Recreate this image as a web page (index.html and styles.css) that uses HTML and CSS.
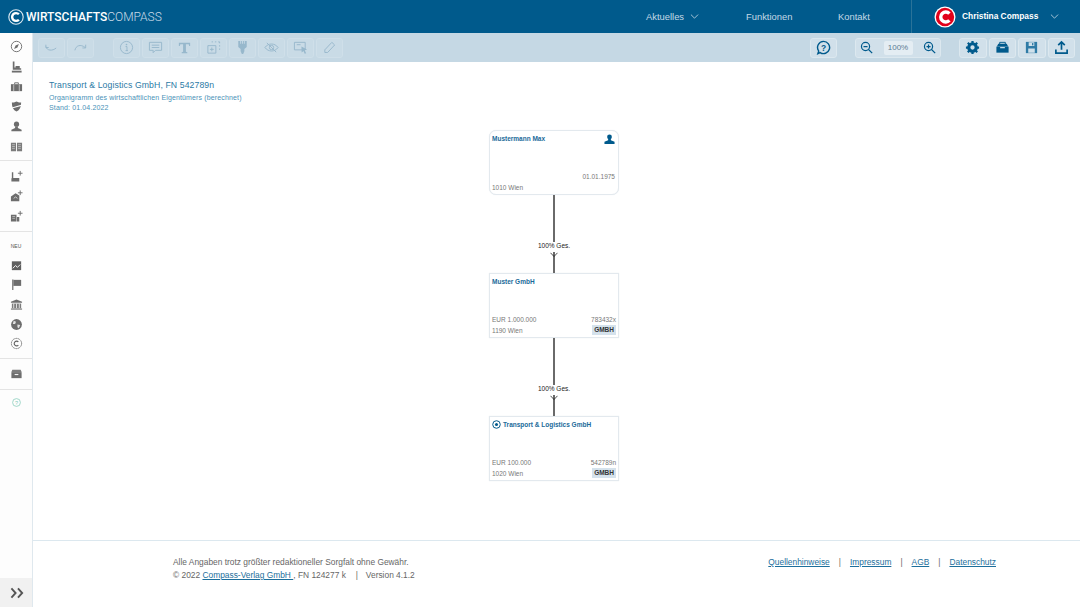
FILE: index.html
```html
<!DOCTYPE html>
<html lang="de">
<head>
<meta charset="utf-8">
<title>Wirtschafts Compass</title>
<link rel="stylesheet" href="styles.css">
</head>
<body>
<header class="topbar">
  <div class="brand">
    <svg class="brand-mark" viewBox="0 0 20 20"><circle cx="10" cy="10" r="9" fill="none" stroke="#dbe8f0" stroke-width="1.4"/><path d="M13.6 6.6a4.9 4.9 0 1 0 0 6.8" fill="none" stroke="#fff" stroke-width="3"/></svg>
    <span class="brand-name"><b>WIRTSCHAFTS</b><span>COMPASS</span></span>
  </div>
  <nav class="topnav">
    <a class="nav-item nav-first">Aktuelles <svg class="chev" viewBox="0 0 10 6"><path d="M.7.7 5 5 9.3.7" fill="none" stroke="currentColor"/></svg></a>
    <a class="nav-item nav-mid">Funktionen</a>
    <a class="nav-item">Kontakt</a>
  </nav>
  <div class="user">
    <svg class="avatar" viewBox="0 0 22 22"><circle cx="11" cy="11" r="10.5" fill="#fff"/><circle cx="11" cy="11" r="9.2" fill="#e2001a"/><path d="M15.4 7.6a5 5 0 1 0 0 6.8" fill="none" stroke="#fff" stroke-width="3.4"/></svg>
    <span class="user-name">Christina Compass</span>
    <svg class="chev user-chev" viewBox="0 0 10 6"><path d="M.7.7 5 5 9.3.7" fill="none" stroke="currentColor"/></svg>
  </div>
</header>
<div class="body-row">
  <aside class="sidebar">
    <div class="side-group group-a">
      <span class="side-item"><svg viewBox="0 0 14 14"><circle cx="7" cy="7" r="5.6" fill="none" stroke="#555" stroke-width="1"/><path d="M9.6 4.4 8 8 4.4 9.6 6 6z" fill="#555"/></svg></span>
      <span class="side-item"><svg viewBox="0 0 14 14"><path d="M3 1.500h1.800v6.500H6V6.500h4.500V9H12v1.500H3z" fill="#555"/><path d="M2 11.500h10.500v2H2z" fill="#555"/></svg></span>
      <span class="side-item"><svg viewBox="0 0 14 14"><path d="M1 4.500h12v7.500H1z" fill="#555"/><path d="M5 4.500V3h4v1.500" fill="none" stroke="#555"/><path d="M4 5v7M10 5v7" stroke="#fff" stroke-width=".6"/></svg></span>
      <span class="side-item"><svg viewBox="0 0 14 14"><path d="M7 1.500c2 1 3.600 1.300 5 1.300 0 5-1.500 8.200-5 9.700-3.500-1.500-5-4.700-5-9.700 1.400 0 3-.3 5-1.300z" fill="#555"/><path d="M2 8l10-3v1.400L3 9z" fill="#fff"/></svg></span>
      <span class="side-item"><svg viewBox="0 0 14 14"><circle cx="7" cy="4.500" r="2.800" fill="#555"/><path d="M5.500 7h3v1.500l4 2V12h-11v-1.500l4-2z" fill="#555"/></svg></span>
      <span class="side-item"><svg viewBox="0 0 14 14"><path d="M1 3h5.500v9H1zM7.500 3H13v9H7.500z" fill="#666"/><path d="M2.300 5h3M2.300 7h3M2.300 9h3M8.700 5h3M8.700 7h3M8.700 9h3" stroke="#ddd" stroke-width=".6"/></svg></span>
    </div>
    <div class="side-group group-b">
      <span class="side-item"><svg viewBox="0 0 14 14"><path d="M2 2.500h1.500v6H10v4H1.500V9H2z" fill="#555"/><path d="M11 1v5M8.500 3.500h5" stroke="#555"/></svg></span>
      <span class="side-item"><svg viewBox="0 0 14 14"><path d="M1 7l5-3.500L10 6v6H1z" fill="#555"/><path d="M4 9l2-1.500L8 9" stroke="#fff" fill="none" stroke-width=".7"/><path d="M11 .5v5M8.500 3h5" stroke="#555"/></svg></span>
      <span class="side-item"><svg viewBox="0 0 14 14"><path d="M1 5h6v7.500H1zM7.500 7.500H10v5H7.500z" fill="#555"/><path d="M2.500 7h3M2.500 9h3" stroke="#ccc" stroke-width=".7"/><path d="M11 1v5M8.500 3.500h5" stroke="#555"/></svg></span>
    </div>
    <div class="side-group group-c">
      <span class="side-item side-label">NEU</span>
      <span class="side-item"><svg viewBox="0 0 14 14"><path d="M2 2.500h10v9.500H2z" fill="#444"/><path d="M3 10l3-3 2 2 3-3" fill="none" stroke="#fff"/></svg></span>
      <span class="side-item"><svg viewBox="0 0 14 14"><path d="M3 1.500v11.500" stroke="#555" stroke-width="1.300"/><path d="M3.600 2h8.400v6.500H3.600z" fill="#555"/></svg></span>
      <span class="side-item"><svg viewBox="0 0 14 14"><path d="M7 1.500 13 4v1H1V4z" fill="#555"/><path d="M2 6h10v5H2z" fill="#666"/><path d="M4 6v5M7 6v5M10 6v5" stroke="#fff" stroke-width=".8"/><path d="M1 11.300h12v1.200H1z" fill="#555"/></svg></span>
      <span class="side-item"><svg viewBox="0 0 14 14"><circle cx="7" cy="7" r="5.800" fill="#555"/><path d="M4 3l2.500 1-1 2.500L3 6.500zM8 7l3 .5-1.500 3.500L8 10z" fill="#ddd"/></svg></span>
      <span class="side-item"><svg viewBox="0 0 14 14"><circle cx="7" cy="7" r="5.500" fill="none" stroke="#555" stroke-dasharray="1.400 .5"/><path d="M9 5.200a2.600 2.600 0 1 0 0 3.600" fill="none" stroke="#444" stroke-width="1.200"/></svg></span>
    </div>
    <div class="side-group group-d">
      <span class="side-item"><svg viewBox="0 0 14 14"><path d="M2.500 3h9l1 2.500h-11z" fill="#666"/><path d="M1.500 5.500h11V12h-11z" fill="#555"/><path d="M5 7.500h4v1.200H5z" fill="#eee"/></svg></span>
    </div>
    <div class="side-group group-e">
      <span class="side-item"><svg viewBox="0 0 14 14"><circle cx="7" cy="7" r="4.200" fill="none" stroke="#6fc3ae" stroke-width=".8"/><text x="7" y="9.200" class="help-q">?</text></svg></span>
    </div>
    <div class="side-expand"><svg viewBox="0 0 16 12"><path d="M1.500 1 6 6l-4.500 5M8.500 1 13 6l-4.500 5" fill="none" stroke="#555" stroke-width="2"/></svg></div>
  </aside>
  <main class="main">
    <div class="toolbar">
      <div class="tool-set">
        <span class="tool"><svg viewBox="0 0 16 16"><path d="M2 7c1 4.500 7 5 11 1.500" class="t-line"/><path d="M2 5v3h3" class="t-line"/></svg></span>
        <span class="tool"><svg viewBox="0 0 16 16"><path d="M2 11c1-5 6-7 11-3" class="t-line"/><path d="M13.500 5v3.500H10" class="t-line"/></svg></span>
        <span class="tool tool-gap"><svg viewBox="0 0 16 16"><circle cx="8" cy="8" r="6.500" class="t-line"/><path d="M7 7h1.500v4.200M7 11.300h2.500" class="t-line"/><circle cx="8" cy="4.800" r=".9" class="t-fill"/></svg></span>
        <span class="tool"><svg viewBox="0 0 16 16"><path d="M1.500 2.500h13v8.500H8l-2.500 2.500V11h-4z" class="t-line"/><path d="M4 5.500h8M4 8h8" class="t-line"/></svg></span>
        <span class="tool"><svg viewBox="0 0 16 16"><path d="M2 3h12v3.500h-1L12.500 4.500H9.500V12.500l1.500.6V14H5v-.9l1.500-.6V4.500h-3L3 6.500H2z" class="t-fill"/></svg></span>
        <span class="tool"><svg viewBox="0 0 16 16"><path d="M2 6h8.500v8H2zM6.200 8v4M4.200 10h4" class="t-line"/><path d="M6 2h1.500M9.500 2H11M13 2h1.500v1.500M14.500 5.500V7M14.500 9v1.500" class="t-line"/></svg></span>
        <span class="tool"><svg viewBox="0 0 16 16"><path d="M3.500 1h9v6.500l-2.500 2v2.500L8.700 15h-1.400L6 12V9.500L3.500 7.500z" class="t-fill"/><path d="M6 1v3M8 1v3M10 1v3" stroke="#c5d8e4"/></svg></span>
        <span class="tool"><svg viewBox="0 0 16 16"><path d="M1 8c3.500-5 10.500-5 14 0-3.500 5-10.500 5-14 0z" class="t-line"/><circle cx="8" cy="8" r="2.300" class="t-line"/><path d="M3 3l10 10" class="t-line"/></svg></span>
        <span class="tool"><svg viewBox="0 0 16 16"><path d="M1.500 2.500h11.500v8H1.500z" class="t-line"/><path d="M4 5h4" class="t-line"/><path d="M9 7l6 3-2.500 1 1.500 3-1.500.6-1.300-3-2 1.700z" class="t-fill"/></svg></span>
        <span class="tool"><svg viewBox="0 0 16 16"><path d="M3 10.500 10.500 2.500l3 2.800-7.500 8H3z" class="t-line"/></svg></span>
      </div>
      <div class="tool-set tool-right">
        <span class="tool tool-on tool-help"><svg viewBox="0 0 16 16"><path d="M8 1.500a6.500 6.500 0 1 1-3.600 11.900L2 14.500l.9-2.700A6.500 6.500 0 0 1 8 1.500z" class="a-line"/><text x="8" y="11.200" class="tool-q">?</text></svg></span>
        <div class="zoom-group">
          <svg class="zoom-icon" viewBox="0 0 16 16"><circle cx="6.800" cy="6.800" r="5" class="a-line"/><path d="M4.300 6.800h5M10.500 10.500 15 15" class="a-line"/></svg>
          <span class="zoom-val">100%</span>
          <svg class="zoom-icon" viewBox="0 0 16 16"><circle cx="6.800" cy="6.800" r="5" class="a-line"/><path d="M4.300 6.800h5M6.800 4.300v5M10.500 10.500 15 15" class="a-line"/></svg>
        </div>
        <span class="tool tool-on tool-first"><svg viewBox="0 0 16 16"><circle cx="8" cy="8" r="4" fill="none" stroke="#005a8c" stroke-width="3.400"/><path d="M8 1v2.500M8 12.500V15M1 8h2.500M12.500 8H15M3 3l2 2M11 11l2 2M13 3l-2 2M5 11l-2 2" stroke="#005a8c" stroke-width="2.400"/></svg></span>
        <span class="tool tool-on"><svg viewBox="0 0 16 16"><path d="M5 4.500V2.500h6v2" fill="none" stroke="#005a8c"/><path d="M3.500 4h9l1.500 3H2z" fill="#005a8c"/><path d="M1.500 7h13v6.500h-13z" fill="#005a8c"/><path d="M5.500 7.500h5v1.300h-5z" fill="#cfe0ea"/></svg></span>
        <span class="tool tool-on"><svg viewBox="0 0 16 16"><path d="M2 2h12v12H2z" fill="#2f7ba6"/><path d="M5 2.500h6v4H5zM4.500 9h7v4.500h-7z" fill="#cfe0ea"/><path d="M8.500 3.300h1.500v2.400H8.500z" fill="#2f7ba6"/></svg></span>
        <span class="tool tool-on"><svg viewBox="0 0 16 16"><path d="M8 10.500V2.500M4.500 5.500 8 2l3.500 3.500M2 10v4h12v-4" fill="none" stroke="#005a8c" stroke-width="1.800"/></svg></span>
      </div>
    </div>
    <section class="content">
      <div class="doc-head">
        <h1 class="doc-title">Transport &amp; Logistics GmbH, FN 542789n</h1>
        <p class="doc-sub">Organigramm des wirtschaftlichen Eigentümers (berechnet)</p>
        <p class="doc-sub">Stand: 01.04.2022</p>
      </div>
      <div class="chart">
        <article class="card card-person">
          <div class="card-top"><strong class="card-name">Mustermann Max</strong><svg class="person" viewBox="0 0 12 12"><circle cx="6" cy="3.200" r="2.600" fill="#005a8c"/><path d="M4.500 5h3v1.800l4 1.700V11H.5V8.500l4-1.700z" fill="#005a8c"/></svg></div>
          <div class="card-row card-row-end"><span>01.01.1975</span></div>
          <div class="card-row card-last"><span>1010 Wien</span></div>
        </article>
        <div class="link"><span class="link-label">100% Ges.</span><svg class="link-arrow" viewBox="0 0 8 6"><path d="M.5.8 4 4.500 7.500.8" fill="none" stroke="#222" stroke-width=".8"/></svg></div>
        <article class="card">
          <div class="card-top"><strong class="card-name">Muster GmbH</strong></div>
          <div class="card-row"><span>EUR 1.000.000</span><span>783432x</span></div>
          <div class="card-row card-last"><span>1190 Wien</span><span class="badge">GMBH</span></div>
        </article>
        <div class="link"><span class="link-label">100% Ges.</span><svg class="link-arrow" viewBox="0 0 8 6"><path d="M.5.8 4 4.500 7.500.8" fill="none" stroke="#222" stroke-width=".8"/></svg></div>
        <article class="card">
          <div class="card-top card-top-start"><svg class="target" viewBox="0 0 10 10"><circle cx="5" cy="5" r="4.200" fill="none" stroke="#005a8c" stroke-width="1.100"/><circle cx="5" cy="5" r="1.700" fill="#005a8c"/></svg><strong class="card-name">Transport &amp; Logistics GmbH</strong></div>
          <div class="card-row"><span>EUR 100.000</span><span>542789n</span></div>
          <div class="card-row card-last"><span>1020 Wien</span><span class="badge">GMBH</span></div>
        </article>
      </div>
    </section>
    <footer class="footer">
      <div class="foot-left">
        <p>Alle Angaben trotz größter redaktioneller Sorgfalt ohne Gewähr.</p>
        <p>© 2022 <a class="foot-link">Compass-Verlag GmbH </a>, FN 124277 k <span class="foot-sep">|</span>Version 4.1.2</p>
      </div>
      <div class="foot-right">
        <a class="foot-link">Quellenhinweise</a><span>|</span><a class="foot-link">Impressum</a><span>|</span><a class="foot-link">AGB</a><span>|</span><a class="foot-link">Datenschutz</a>
      </div>
    </footer>
  </main>
</div>
</body>
</html>
```
FILE: styles.css
```css
* { box-sizing: border-box; }
html, body { margin: 0; height: 100%; }
body { width: 1080px; height: 607px; overflow: hidden; background: #fff; font-family: "Liberation Sans", Arial, sans-serif; display: flex; flex-direction: column; color: #666; }
p, h1 { margin: 0; font-weight: normal; }

.topbar { height: 33px; flex: none; background: #005a8c; display: flex; align-items: center; color: #c4d9e6; }
.brand { width: 640px; padding-left: 8px; display: flex; align-items: center; gap: 2px; }
.brand-mark { width: 16px; height: 16px; }
.brand-name { font-family: Roboto, sans-serif; font-size: 12px; color: #c9dbe7; display: flex; gap: 0; }
.brand-name b { color: #fff; font-weight: 500; }
.brand-name span { font-weight: 300; }
.topnav { display: flex; align-items: center; width: 271px; font-size: 9.400px; padding-left: 6px; height: 100%; }
.nav-item { display: flex; align-items: center; gap: 6px; }
.nav-first { width: 100px; }
.nav-mid { width: 92px; }
.chev { width: 9px; height: 5px; }
.user { flex: 1; height: 100%; border-left: 1px solid #2a7399; display: flex; align-items: center; padding-left: 22px; }
.avatar { width: 22px; height: 22px; }
.user-name { margin-left: 6px; color: #fff; font-weight: bold; font-size: 8.400px; width: 88px; margin-top: -1px; }

.body-row { flex: 1; display: flex; min-height: 0; }
.sidebar { width: 33px; flex: none; background: #fdfdfd; border-right: 1px solid #dfe8ee; display: flex; flex-direction: column; }
.side-group { border-bottom: 1px solid #e4e4e4; }
.group-a { padding: 3px 0 4px; }
.group-b { padding: 5px 0 5px; }
.group-c { padding: 4px 0 4px; }
.group-d { padding: 5px 0 5px; }
.group-e { border-bottom: 0; padding: 3px 0 0; flex: 1; }
.side-item { height: 20px; display: flex; align-items: center; justify-content: center; }
.group-c .side-item { height: 19.600px; }
.side-item svg { width: 13px; height: 13px; opacity: .85; }
.side-label { font-size: 5px; color: #555; }
.help-q { font: 6px "Liberation Sans", sans-serif; fill: #6fc3ae; text-anchor: middle; }
.side-expand { height: 29px; background: #f1f1f1; display: flex; align-items: center; justify-content: center; }
.side-expand svg { width: 15px; height: 12px; margin-left: 2px; }

.main { flex: 1; display: flex; flex-direction: column; min-width: 0; }
.toolbar { height: 29px; flex: none; background: #c5d8e4; display: flex; align-items: center; justify-content: space-between; padding: 0 5px; }
.tool-set { display: flex; align-items: center; gap: 2px; }
.tool { width: 27px; height: 20px; background: #c9dbe6; border: 1px solid #cfdfe9; border-radius: 3px; display: flex; align-items: center; justify-content: center; }
.tool svg { width: 15px; height: 15px; }
.tool-gap { margin-left: 17px; }
.t-line { fill: none; stroke: #97b8cc; stroke-width: 1; }
.t-fill { fill: #97b8cc; }
.tool-on { width: 27.500px; background: #d1e0ea; border-color: #dce8ef; }
.tool-help { width: 27px; margin-right: 16px; }
.tool-first { margin-left: 16px; }
.a-line { fill: none; stroke: #005a8c; stroke-width: 1.500; }
.tool-q { font: bold 9px "Liberation Sans", sans-serif; fill: #005a8c; text-anchor: middle; }
.zoom-group { width: 86px; height: 20px; background: #d1e0ea; border: 1px solid #dce8ef; border-radius: 3px; display: flex; align-items: center; justify-content: space-between; padding: 0 4px; }
.zoom-icon { width: 13px; height: 13px; }
.zoom-val { width: 29px; height: 14px; background: #e4edf3; border-radius: 2px; font-size: 8px; color: #5c7d93; text-align: center; line-height: 14px; }

.content { flex: 1; min-height: 0; padding: 17px 0 0 16px; }
.doc-head { height: 51px; color: #3a86ae; }
.doc-title { font-size: 8.700px; line-height: 12px; letter-spacing: .1px; color: #2c7aa5; margin-bottom: 1.500px; }
.doc-sub { font-size: 7px; line-height: 10px; letter-spacing: .14px; color: #4a92b8; }
.chart { margin-left: 440px; width: 130px; display: flex; flex-direction: column; }
.card { height: 65px; background: #fff; border: 1px solid #e3e9ee; padding: 3px 2px 0; display: flex; flex-direction: column; font-size: 6.500px; color: #777; box-shadow: 0 0 1px #e3e9ee; }
.card-person { border-radius: 7px; }
.card-top { display: flex; justify-content: space-between; align-items: flex-start; flex: 1; }
.card-top-start { justify-content: flex-start; gap: 2px; }
.card-name { font-size: 6.500px; color: #1a6a99; line-height: 8px; font-weight: bold; margin-top: 1px; }
.person { width: 11px; height: 11px; margin-right: 1px; }
.target { width: 9px; height: 9px; }
.card-row { display: flex; justify-content: space-between; align-items: center; height: 10px; }
.card-row-end { justify-content: flex-end; padding-right: 1px; }
.card-last { margin-top: 1px; margin-bottom: 2px; }
.badge { background: #d5e2ec; color: #333; font-weight: bold; font-size: 6.500px; padding: 0 2px; height: 10px; line-height: 10px; }
.link { height: 78px; position: relative; display: flex; justify-content: center; }
.link::before { content: ""; width: 2px; height: 100%; background: #6a6a6a; }
.link-label { position: absolute; left: 0; right: 0; top: 47px; margin: 0 auto; width: 36px; background: #fff; color: #222; font-size: 6.500px; line-height: 8px; text-align: center; padding-bottom: 2px; }
.link-arrow { position: absolute; left: 61px; top: 57px; width: 8px; height: 6px; }

.footer { height: 67px; flex: none; border-top: 1px solid #dce8ef; display: flex; justify-content: space-between; padding: 15px 84px 0 140px; font-size: 8.400px; color: #666; }
.foot-left p { line-height: 13px; }
.foot-link { color: #1d6f9c; text-decoration: underline; }
.foot-sep { margin: 0 8px 0 7.500px; }
.foot-right { display: flex; gap: 9px; height: 13px; line-height: 13px; }
```
